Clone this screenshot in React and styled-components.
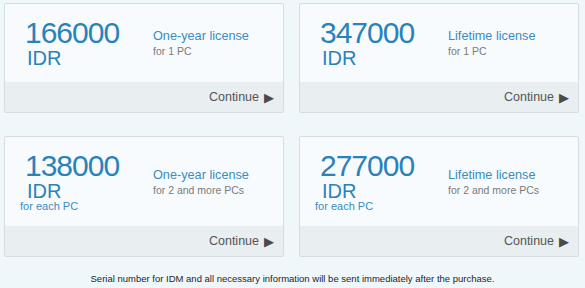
import React from 'react';
import styled, { createGlobalStyle } from 'styled-components';

const GlobalStyle = createGlobalStyle`
  html, body {
    margin: 0;
    padding: 0;
    background: #f0f7fb;
    font-family: "Liberation Sans", Arial, sans-serif;
  }
`

const Page = styled.div`
  width: 585px;
  height: 288px;
  padding: 3px 0 0 4px;
  box-sizing: border-box;
  overflow: hidden;
`

const Grid = styled.div`
  display: grid;
  grid-template-columns: 280px 280px;
  column-gap: 15px;
  row-gap: 23px;
`

const Card = styled.div`
  display: flex;
  flex-direction: column;
  background: #f8fbfd;
  border: 1px solid #d6dce0;
  border-radius: 2px;
  box-sizing: border-box;
`

const Body = styled.div`
  display: flex;
  align-items: center;
  padding: 15px 0 ${p => (p.$each ? '14px' : '15px')} 15px;
`

const PriceCol = styled.div`
  display: flex;
  flex-direction: column;
  width: 133px;
  flex-shrink: 0;
`

const Amount = styled.div`
  font-size: 30px;
  line-height: 28px;
  letter-spacing: -1px;
  color: #2a82bb;
  margin-left: 5px;
`

const Currency = styled.div`
  font-size: 20px;
  line-height: 18px;
  color: #2a82bb;
  margin: 2px 0 0 7px;
`

const Each = styled.div`
  font-size: 11px;
  line-height: 12px;
  color: #3a8cc1;
`

const InfoCol = styled.div`
  display: flex;
  flex-direction: column;
`

const Title = styled.div`
  font-size: 12.7px;
  line-height: 15px;
  color: #3a8cc1;
`

const Sub = styled.div`
  font-size: 10.5px;
  line-height: 13px;
  color: #7a7a7a;
  margin-top: 1px;
`

const Footer = styled.div`
  display: flex;
  justify-content: flex-end;
  align-items: center;
  height: 30px;
  padding-right: 9px;
  background: #e9eef1;
  font-size: 12.5px;
  color: #555;
  gap: 5px;
`

const Arrow = styled.span`
  font-size: 12.5px;
  color: #4a4a4a;
`

const Note = styled.div`
  width: 585px;
  margin: 16px 0 0 -4px;
  text-align: center;
  font-size: 9.5px;
  line-height: 12px;
  color: #1d1d2b;
`

const plans = [
  { price: '166000', title: 'One-year license', sub: 'for 1 PC' },
  { price: '347000', title: 'Lifetime license', sub: 'for 1 PC' },
  { price: '138000', title: 'One-year license', sub: 'for 2 and more PCs', each: true },
  { price: '277000', title: 'Lifetime license', sub: 'for 2 and more PCs', each: true },
]

const App = () => {
  return (
    <Page>
      <GlobalStyle />
      <Grid>
        {plans.map((plan, i) => (
          <Card key={i}>
            <Body $each={plan.each}>
              <PriceCol>
                <Amount>{plan.price}</Amount>
                <Currency>IDR</Currency>
                {plan.each && <Each>for each PC</Each>}
              </PriceCol>
              <InfoCol>
                <Title>{plan.title}</Title>
                <Sub>{plan.sub}</Sub>
              </InfoCol>
            </Body>
            <Footer>
              Continue <Arrow>&#9654;</Arrow>
            </Footer>
          </Card>
        ))}
      </Grid>
      <Note>Serial number for IDM and all necessary information will be sent immediately after the purchase.</Note>
    </Page>
  );
}

export default App
